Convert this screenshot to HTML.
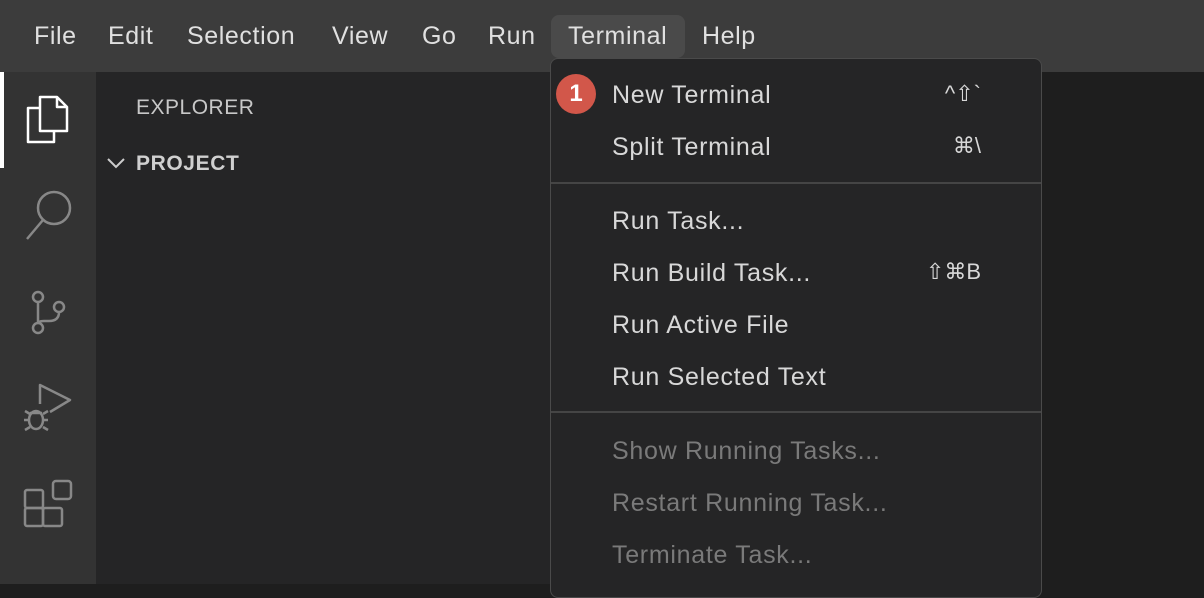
<!DOCTYPE html><html><head><style>
body{margin:0;width:1204px;height:584px;overflow:hidden;background:#1e1e1e;font-family:"Liberation Sans",sans-serif;position:relative}
.tb{position:absolute;left:0;top:0;width:1204px;height:72px;background:#3c3c3c}
.tb span{position:absolute;top:22px;font-size:25px;letter-spacing:0.6px;color:#e0e0e0}
.act{position:absolute;left:0;top:72px;width:96px;height:512px;background:#333}
.side{position:absolute;left:96px;top:72px;width:455px;height:512px;background:#252526}
.menu{position:absolute;left:550px;top:58px;width:492px;height:540px;background:#252526;border:1px solid #4a4a4a;border-radius:8px;box-sizing:border-box}
.it{position:absolute;left:61px;font-size:25px;letter-spacing:0.7px;color:#d8d8d8}
.sc{position:absolute;right:60px;font-size:22px;color:#d8d8d8}
.dis{color:#7a7a7a}
.sep{position:absolute;left:0;right:0;height:2px;background:#454545}
</style></head><body>
<div class="tb">
<span style="left:34px">File</span><span style="left:108px">Edit</span><span style="left:187px">Selection</span><span style="left:332px">View</span><span style="left:422px">Go</span><span style="left:488px">Run</span>
<div style="position:absolute;left:551px;top:15px;width:134px;height:43px;background:#4a4a4a;border-radius:8px"></div>
<span style="left:568px">Terminal</span><span style="left:702px">Help</span>
</div>
<div class="act"><div style="position:absolute;left:0;top:0;width:4px;height:96px;background:#fff"></div></div>
<div class="side">
<div style="position:absolute;left:40px;top:24px;font-size:21px;letter-spacing:0.5px;color:#c8c8c8">EXPLORER</div>
<svg style="position:absolute;left:10px;top:84px" width="22" height="16"><path d="M2 3l8 8 8-8" stroke="#ccc" stroke-width="2" fill="none"/></svg>
<div style="position:absolute;left:40px;top:80px;font-size:21px;font-weight:bold;letter-spacing:0.6px;color:#d0d0d0">PROJECT</div>
</div>
<svg width="96" height="584" style="position:absolute;left:0;top:0" fill="none" stroke-width="2.5" stroke-linejoin="round">
<g stroke="#fff"><path d="M40 97h17l10 10v24H40z M57 97v10h10"/><path d="M40 108h-12v34h26v-11"/></g>
<g stroke="#888"><circle cx="54" cy="208" r="16"/><path d="M43 220l-16 19"/>
<circle cx="38" cy="297" r="5"/><circle cx="59" cy="307" r="5"/><circle cx="38" cy="328" r="5"/><path d="M38 302v21M59 312q0 9-10 9h-5q-6 0-6 3"/>
<path d="M40 404v-19l30 15-20 12"/><ellipse cx="36" cy="420" rx="7" ry="9"/><path d="M30 413h12M25 411l5 3M48 411l-5 3M25 430l5-3M48 430l-5-3M24 420h5M43 420h5"/>
<rect x="25" y="490" width="18" height="18" rx="2"/><rect x="25" y="508" width="18" height="18" rx="2"/><rect x="43" y="508" width="19" height="18" rx="2"/><rect x="53" y="481" width="18" height="18" rx="3"/></g>
</svg>
<div class="menu">
<div style="position:absolute;left:5px;top:15px;width:40px;height:40px;border-radius:50%;background:#d2574a;color:#fff;font-weight:bold;font-size:24px;text-align:center;line-height:40px">1</div>
<div class="it" style="top:22px">New Terminal</div><div class="sc" style="top:22px">^⇧`</div>
<div class="it" style="top:74px">Split Terminal</div><div class="sc" style="top:74px">⌘\</div>
<div class="sep" style="top:123px"></div>
<div class="it" style="top:148px">Run Task...</div>
<div class="it" style="top:200px">Run Build Task...</div><div class="sc" style="top:200px">⇧⌘B</div>
<div class="it" style="top:252px">Run Active File</div>
<div class="it" style="top:304px">Run Selected Text</div>
<div class="sep" style="top:352px"></div>
<div class="it dis" style="top:378px">Show Running Tasks...</div>
<div class="it dis" style="top:430px">Restart Running Task...</div>
<div class="it dis" style="top:482px">Terminate Task...</div>
</div>
</body></html>
